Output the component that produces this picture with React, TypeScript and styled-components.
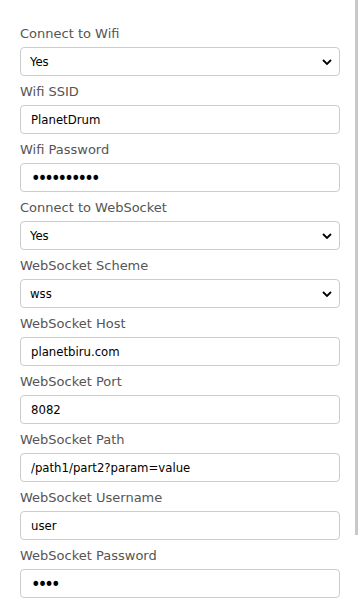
import React, { useState } from "react";
import styled, { createGlobalStyle } from "styled-components";

const GlobalStyle = createGlobalStyle`
  html, body {
    margin: 0;
    padding: 0;
    background: #fff;
  }
  body {
    font-family: "DejaVu Sans", Verdana, sans-serif;
  }
`;

const Page = styled.div`
  padding: 26px 20px 40px;
`;

// the page scrolls; headless hides the native bar so draw its thumb
const ScrollThumb = styled.div`
  position: fixed;
  top: 0;
  right: 2px;
  width: 3px;
  height: 535px;
  background: #c8c8c8;
`;

const Field = styled.div`
  display: flex;
  flex-direction: column;
  margin-bottom: 8px;
`;

const Label = styled.label`
  font-size: 13px;
  line-height: 16px;
  color: #555;
  margin-bottom: 5px;
`;

const Input = styled.input<{ $secret?: boolean }>`
  box-sizing: border-box;
  width: 320px;
  height: 29px;
  padding: 0 10px;
  border: 1px solid #ccc;
  border-radius: 4px;
  font-family: "DejaVu Sans Condensed", "DejaVu Sans", sans-serif;
  font-size: ${(p) => (p.$secret ? "18px" : "13px")};
  letter-spacing: ${(p) => (p.$secret ? "-2.9px" : "normal")};
  color: #000;
  background: #fff;
  outline: none;
`;

const chevron =
  "data:image/svg+xml;utf8,<svg xmlns='http://www.w3.org/2000/svg' width='10' height='6' viewBox='0 0 10 6'><path d='M1 1l4 4 4-4' fill='none' stroke='black' stroke-width='1.8'/></svg>";

const Select = styled.select`
  box-sizing: border-box;
  width: 320px;
  height: 29px;
  padding: 0 24px 0 9px;
  border: 1px solid #ccc;
  border-radius: 4px;
  font-family: "DejaVu Sans Condensed", "DejaVu Sans", sans-serif;
  font-size: 13px;
  color: #000;
  appearance: none;
  background: #fff url("${chevron}") no-repeat right 7px center;
  outline: none;
`;

const SaveButton = styled.button`
  margin-top: 8px;
  width: 320px;
  height: 30px;
  border: 1px solid #ccc;
  border-radius: 4px;
  background: #f4f4f4;
  font-family: "DejaVu Sans", sans-serif;
  font-size: 13px;
`;

type Item =
  | { kind: "select"; label: string; value: string; options: string[] }
  | { kind: "text" | "password"; label: string; value: string };

const items: Item[] = [
  { kind: "select", label: "Connect to Wifi", value: "Yes", options: ["Yes", "No"] },
  { kind: "text", label: "Wifi SSID", value: "PlanetDrum" },
  { kind: "password", label: "Wifi Password", value: "0123456789" },
  { kind: "select", label: "Connect to WebSocket", value: "Yes", options: ["Yes", "No"] },
  { kind: "select", label: "WebSocket Scheme", value: "wss", options: ["ws", "wss"] },
  { kind: "text", label: "WebSocket Host", value: "planetbiru.com" },
  { kind: "text", label: "WebSocket Port", value: "8082" },
  { kind: "text", label: "WebSocket Path", value: "/path1/part2?param=value" },
  { kind: "text", label: "WebSocket Username", value: "user" },
  { kind: "password", label: "WebSocket Password", value: "pass" },
];

export default function App() {
  const [values, setValues] = useState<string[]>(items.map((i) => i.value));

  const update = (idx: number, v: string) => {
    const next = [...values];
    next[idx] = v;
    setValues(next);
  };

  return (
    <>
      <GlobalStyle />
      <Page>
        {items.map((item, idx) => {
          const id = "field" + idx;
          return (
            <Field key={id}>
              <Label htmlFor={id}>{item.label}</Label>
              {item.kind === "select" ? (
                <Select id={id} value={values[idx]} onChange={(e) => update(idx, e.target.value)}>
                  {item.options.map((o) => (
                    <option key={o} value={o}>
                      {o}
                    </option>
                  ))}
                </Select>
              ) : (
                <Input
                  id={id}
                  type={item.kind}
                  $secret={item.kind === "password"}
                  value={values[idx]}
                  onChange={(e) => update(idx, e.target.value)}
                />
              )}
            </Field>
          );
        })}
        <SaveButton>Save</SaveButton>
      </Page>
      <ScrollThumb />
    </>
  );
}
